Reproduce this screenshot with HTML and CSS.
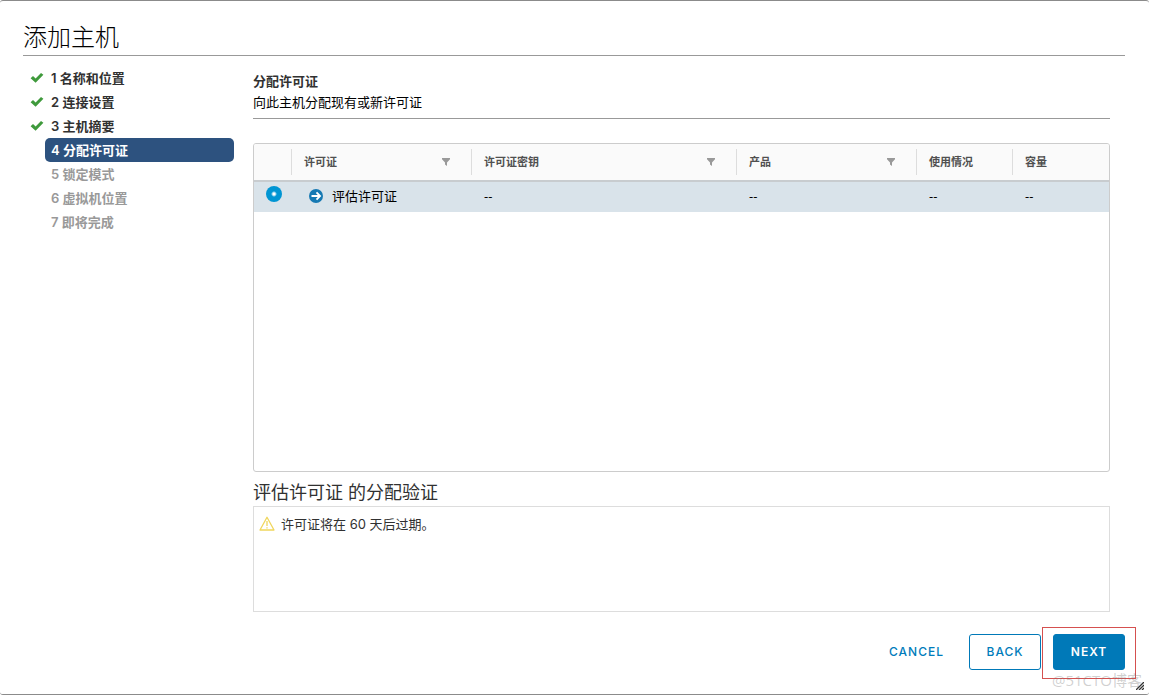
FILE: index.html
```html
<!DOCTYPE html>
<html lang="zh-CN">
<head>
<meta charset="utf-8">
<title>添加主机</title>
<link rel="stylesheet" href="styles.css">
</head>
<body>
<div class="dialog" role="dialog" aria-labelledby="dialog-title">
  <header class="dialog-header">
    <h1 class="dialog-title" id="dialog-title">添加主机</h1>
  </header>
  <div class="dialog-body">
    <nav class="steps" aria-label="步骤">
      <ol class="step-list">
        <li class="step done"><svg class="check" viewBox="0 0 14 12" aria-hidden="true"><path d="M.6 6.2 3 4 5.6 6.4 11 1 13.4 2.8 5.6 10.8Z"/></svg><span class="step-name">1 名称和位置</span></li>
        <li class="step done"><svg class="check" viewBox="0 0 14 12" aria-hidden="true"><path d="M.6 6.2 3 4 5.6 6.4 11 1 13.4 2.8 5.6 10.8Z"/></svg><span class="step-name">2 连接设置</span></li>
        <li class="step done"><svg class="check" viewBox="0 0 14 12" aria-hidden="true"><path d="M.6 6.2 3 4 5.6 6.4 11 1 13.4 2.8 5.6 10.8Z"/></svg><span class="step-name">3 主机摘要</span></li>
        <li class="step current" aria-current="step"><span class="step-name">4 分配许可证</span></li>
        <li class="step"><span class="step-name">5 锁定模式</span></li>
        <li class="step"><span class="step-name">6 虚拟机位置</span></li>
        <li class="step"><span class="step-name">7 即将完成</span></li>
      </ol>
    </nav>
    <main class="content">
      <div class="page-heading">
        <h2 class="page-title">分配许可证</h2>
        <p class="page-note">向此主机分配现有或新许可证</p>
      </div>
      <div class="grid-panel">
        <table class="licenses">
          <colgroup><col class="col-select"><col class="col-license"><col class="col-key"><col class="col-product"><col class="col-usage"><col></colgroup>
          <thead>
            <tr>
              <th></th>
              <th><div class="head-cell"><span>许可证</span><button class="filter" type="button" aria-label="筛选许可证"><svg class="funnel" viewBox="0 0 10 8" aria-hidden="true"><path d="M1 0H9V1.2L6 4.4V8L4 6.6V4.4L1 1.2Z"/></svg></button></div></th>
              <th><div class="head-cell"><span>许可证密钥</span><button class="filter" type="button" aria-label="筛选许可证密钥"><svg class="funnel" viewBox="0 0 10 8" aria-hidden="true"><path d="M1 0H9V1.2L6 4.4V8L4 6.6V4.4L1 1.2Z"/></svg></button></div></th>
              <th><div class="head-cell"><span>产品</span><button class="filter" type="button" aria-label="筛选产品"><svg class="funnel" viewBox="0 0 10 8" aria-hidden="true"><path d="M1 0H9V1.2L6 4.4V8L4 6.6V4.4L1 1.2Z"/></svg></button></div></th>
              <th><div class="head-cell"><span>使用情况</span></div></th>
              <th><div class="head-cell"><span>容量</span></div></th>
            </tr>
          </thead>
          <tbody>
            <tr class="selected">
              <td class="select-cell"><input class="radio" type="radio" name="license" id="license-eval" checked></td>
              <td><label class="license-name" for="license-eval"><svg class="license-icon" viewBox="0 0 14 14" aria-hidden="true"><circle cx="7" cy="7" r="7" fill="#1679b3"/><path d="M2.5 7H11M7.5 3.3 11.1 7 7.5 10.7" fill="none" stroke="#fff" stroke-width="1.8"/></svg><span>评估许可证</span></label></td>
              <td>--</td>
              <td>--</td>
              <td>--</td>
              <td>--</td>
            </tr>
          </tbody>
        </table>
      </div>
      <h3 class="validation-title">评估许可证 的分配验证</h3>
      <div class="validation">
        <svg class="warning" viewBox="0 0 16 15" aria-hidden="true"><path d="M8 1.2 15 14H1Z" fill="none" stroke="#f0d65c" stroke-width="1.3" stroke-linejoin="round"/><path d="M8 5V10M8 11.2V12.6" stroke="#f0d65c" stroke-width="1.3"/></svg>
        <span>许可证将在 60 天后过期。</span>
      </div>
    </main>
  </div>
  <footer class="dialog-footer">
    <button class="btn btn-link" type="button">CANCEL</button>
    <button class="btn btn-outline" type="button">BACK</button>
    <div class="next-wrap">
      <button class="btn btn-primary" type="button">NEXT</button>
      <div class="highlight"></div>
    </div>
  </footer>
  <div class="watermark">@51CTO博客</div>
  <svg class="resize" viewBox="0 0 8 8" aria-hidden="true"><path d="M0 8 8 0M3 8 8 3M6 8 8 6" stroke="#333" stroke-width="1.3"/></svg>
</div>
</body>
</html>
```
FILE: styles.css
```css
* { box-sizing: border-box; }

body {
  margin: 0;
  background: #fff;
  color: #313131;
  font: 13px/24px Inter, "Noto Sans CJK SC", sans-serif;
}

h1, h2, h3, p, ol { margin: 0; padding: 0; }

.dialog {
  position: relative;
  display: flex;
  flex-direction: column;
  min-height: 100vh;
  padding: 20px 24px 24px 23px;
  border-top: 1px solid #8b8b8b;
  border-bottom: 1px solid #8b8b8b;
  border-radius: 3px;
}

.dialog-header {
  border-bottom: 1px solid #999;
}

.dialog-title {
  font-size: 24px;
  line-height: 34px;
  font-weight: 300;
  color: #000;
}

.dialog-body {
  flex: 1;
  display: flex;
  gap: 19px;
  padding: 10px 15px 0 0;
}

.steps { width: 211px; flex: none; }

.step-list { list-style: none; }

.step {
  display: flex;
  align-items: center;
  justify-content: flex-end;
  gap: 1px;
  height: 24px;
  font-weight: 600;
  color: #999;
}

.step-name {
  flex: none;
  width: 189px;
  padding-left: 6px;
  border-radius: 5px;
}

.done { color: #313131; }
.current { color: #fff; }
.current .step-name { background: #2d527f; }

.check {
  width: 14px;
  height: 12px;
  fill: #3f9a3c;
}

.content {
  flex: 1;
  min-width: 0;
  display: flex;
  flex-direction: column;
}

.page-heading {
  padding: 5px 0;
  border-bottom: 1px solid #999;
  line-height: 21px;
}

.page-title {
  font-size: 13px;
  font-weight: 600;
}

.page-note { color: #000; }

.grid-panel {
  flex: 1;
  margin-top: 24px;
  border: 1px solid #ccc;
  border-radius: 3px;
  overflow: hidden;
}

.licenses {
  width: 100%;
  table-layout: fixed;
  border-collapse: separate;
  border-spacing: 0;
  font-family: "Open Sans", "Noto Sans CJK SC", sans-serif;
}

.col-select { width: 37px; }
.col-license { width: 180px; }
.col-key { width: 265px; }
.col-product { width: 180px; }
.col-usage { width: 96px; }

th {
  height: 38px;
  padding: 0;
  background: #fafafa;
  border-bottom: 2px solid #c8cccf;
  font-size: 11px;
  font-weight: 600;
  color: #505050;
  text-align: left;
}

.head-cell {
  display: flex;
  align-items: center;
  justify-content: space-between;
  height: 26px;
  padding: 0 20px 0 12px;
  border-left: 1px solid #ddd;
}

.filter {
  display: flex;
  padding: 0;
  border: 0;
  background: none;
}

.funnel {
  width: 10px;
  height: 8px;
  fill: #999;
}

td {
  height: 30px;
  padding: 0 13px 2px;
  background: #d9e3ea;
  color: #000;
}

.select-cell { padding: 0 0 0 12px; }

.radio {
  appearance: none;
  display: block;
  width: 16px;
  height: 16px;
  margin: 0 0 6px;
  border-radius: 50%;
  background: radial-gradient(circle, #fff 1px, #0095d3 3px);
}

.license-name {
  display: flex;
  align-items: center;
  gap: 9px;
  padding-left: 5px;
}

.license-icon {
  width: 14px;
  height: 14px;
}

.validation-title {
  margin-top: 8px;
  font-size: 18px;
  line-height: 26px;
  font-weight: 400;
}

.validation {
  display: flex;
  align-items: flex-start;
  gap: 6px;
  min-height: 106px;
  padding: 5px;
  border: 1px solid #ddd;
}

.warning {
  width: 16px;
  height: 15px;
  margin-top: 4px;
}

.dialog-footer {
  display: flex;
  justify-content: flex-end;
  gap: 12px;
  padding-top: 22px;
}

.btn {
  min-width: 72px;
  height: 36px;
  padding: 0 12px;
  border: 1px solid #0079b8;
  border-radius: 3px;
  font: 500 12px/34px Inter, sans-serif;
  letter-spacing: 1px;
}

.btn-link {
  border-color: transparent;
  background: none;
  color: #007cbb;
}

.btn-outline {
  background: #fff;
  color: #007cbb;
}

.btn-primary {
  background: #0079b8;
  color: #fff;
  font-weight: 600;
}

.next-wrap { position: relative; }

.highlight {
  position: absolute;
  inset: -7px -11px -9px;
  border: 1px solid #d5504f;
  pointer-events: none;
}

.watermark {
  position: absolute;
  right: 7px;
  bottom: 3px;
  font: 15px/22px "Open Sans", "Noto Sans CJK SC", sans-serif;
  color: rgba(120, 120, 120, 0.35);
  pointer-events: none;
}

.resize {
  position: absolute;
  right: 5px;
  bottom: 4px;
  width: 8px;
  height: 8px;
}
```
